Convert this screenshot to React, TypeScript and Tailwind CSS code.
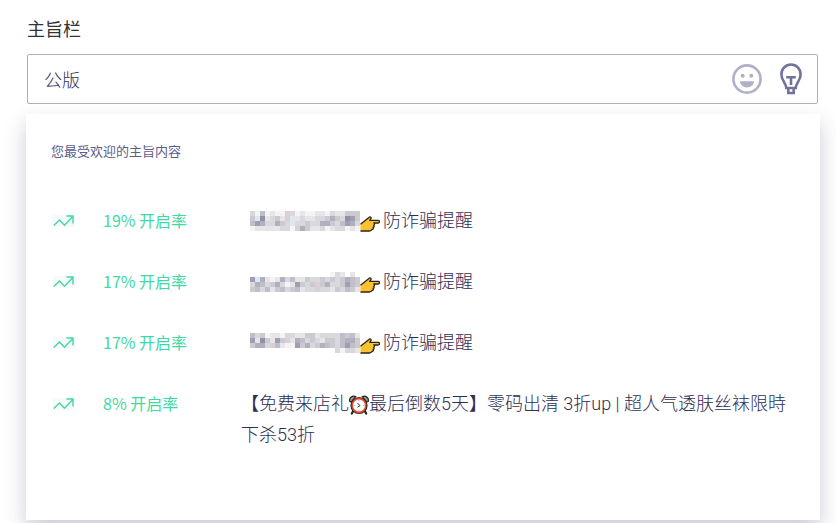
type Suggestion = {
  rate: number;
  before?: string;
  icon: "hand" | "clock";
  after: string;
  mosaic?: string[];
};

// one letter per cell, see mosaicColors
const mosaicA = [
  "caeabaajcabaabbacbbddd",
  "dihbcdbjibcbbccdfdchgd",
  "egfccfdciccdccffdcegfc",
  "abbbbbccajfdbbcabccaba",
];
const mosaicB = [
  "................acb.b.",
  "gifbabfcebbdccdcdcdfed",
  "cfecdfcabgdcdjdfccdged",
  "decebdecdebccjccbdcedb",
];
const mosaicC = [
  "ecdabbaccbbddbccccedeb",
  "gbhdbgdjbfecdcbddceffd",
  "dffcjebaagdfcdfedceged",
  ".................caccb",
];

const mosaicColors: { [key: string]: string } = {
  ".": "#ffffff",
  a: "#f4f4f5",
  b: "#e6e6e9",
  c: "#d8d8dd",
  d: "#cbcad2",
  e: "#bfbec9",
  f: "#b2b0be",
  g: "#a09fb1",
  h: "#9290a6",
  i: "#dce8f2",
  j: "#dccfd2",
};

const suggestions: Suggestion[] = [
  { rate: 19, icon: "hand", after: "防诈骗提醒", mosaic: mosaicA },
  { rate: 17, icon: "hand", after: "防诈骗提醒", mosaic: mosaicB },
  { rate: 17, icon: "hand", after: "防诈骗提醒", mosaic: mosaicC },
  {
    rate: 8,
    before: "【免费来店礼",
    icon: "clock",
    after: "最后倒数5天】零码出清 3折up | 超人气透肤丝袜限時下杀53折",
  },
];

const SmileIcon = () => (
  <svg width="30" height="30" viewBox="0 0 30 30" fill="none" aria-hidden="true">
    <circle cx="15" cy="15" r="13.6" stroke="currentColor" strokeWidth="2.6" />
    <circle cx="10.7" cy="11.8" r="2" fill="currentColor" />
    <circle cx="19.3" cy="11.8" r="2" fill="currentColor" />
    <path d="M7.800 17.200h14.400c-.6 3.800-3.500 6.200-7.200 6.200s-6.600-2.400-7.200-6.200Z" fill="currentColor" />
  </svg>
);

const BulbIcon = () => (
  <svg width="22" height="32" viewBox="0 0 22 32" fill="none" stroke="currentColor" strokeWidth="2.6" aria-hidden="true">
    <path d="M6.300 25c0-4.800-4.900-7.500-4.900-13.600a9.600 9.900 0 0 1 19.200 0c0 6.100-4.900 8.800-4.900 13.600Z" />
    <path d="M8.300 25v5h5.400v-5" />
    <path d="M6.200 14.300h9.600M11 14.300V22" />
  </svg>
);

const TrendIcon = () => (
  <svg width="22" height="12" viewBox="0 0 22 12" fill="none" stroke="#3fd9a4" strokeWidth="1.4" className="ml-px bg-[#f8f9fb]" aria-hidden="true">
    <path d="M.8 10.600 6.500 5 11.500 10.300 20 1.300M13.500 1H20v7.500" />
  </svg>
);

const HandIcon = () => (
  <svg width="20" height="16" viewBox="0 0 20 16" className="mr-[3px] inline-block align-[-5px]" role="img" aria-label="👉">
    <path
      d="M.5 15V8.200L5.200 4.400 9.500 1c1.200-.5 2.100.7 1.400 1.700L9.700 4.400h8.500c1.700 0 1.700 2.600 0 2.600h-4.400c1.100.6.9 2-.2 2.300.9.700.5 2-.5 2.200.6 1-.1 2.100-1.200 2.100-.5 1.200-1.500 1.400-2.600 1.400Z"
      fill="#fcc131"
    />
    <path
      d="M.5 8.200 5.200 4.400 9.500 1c1.200-.5 2.100.7 1.400 1.700L9.700 4.400h8.500c1.700 0 1.700 2.600 0 2.600h-4.400c1.100.6.9 2-.2 2.300.9.700.5 2-.5 2.200.6 1-.1 2.100-1.200 2.100-.5 1.200-1.500 1.400-2.600 1.400H.5"
      stroke="#2a2418"
      strokeWidth="1.3"
      strokeLinejoin="round"
      fill="none"
    />
  </svg>
);

const ClockIcon = () => (
  <svg width="20" height="20" viewBox="0 0 20 20" className="inline-block align-[-5px]" role="img" aria-label="⏰">
    <path d="m4.500 15.500-1.700 3M15.500 15.500l1.700 3" stroke="#222" strokeWidth="2.200" strokeLinecap="round" />
    <path d="M.8 6.500C-.2 3 3 .3 6.700 1.500L2.300 7Z" fill="#999" stroke="#222" strokeWidth="1.200" />
    <path d="M19.200 6.500C20.200 3 17 .3 13.300 1.500L17.700 7Z" fill="#999" stroke="#222" strokeWidth="1.200" />
    <circle cx="10" cy="10.500" r="8.600" fill="#222" />
    <circle cx="10" cy="10.500" r="6.800" fill="#fff" stroke="#e64a2e" strokeWidth="1.700" />
    <path d="m8.500 8 2.500 2.700-2.500 1.500" fill="none" stroke="#333" strokeWidth="1" />
    <path d="M10 5v1M10 15v1M4.700 10.500h1M14.300 10.500h1" stroke="#999" strokeWidth=".8" />
  </svg>
);

const Mosaic = ({ rows }: { rows: string[] }) => (
  <svg width="110" height="20" viewBox="0 0 22 4" shapeRendering="crispEdges" className="ml-[9px] inline-block align-[-4px]" aria-hidden="true">
    {rows.map((row, y) =>
      row
        .split("")
        .map((cell, x) => (
          <rect key={`${x}-${y}`} x={x} y={y} width="1" height="1" fill={mosaicColors[cell]} />
        ))
    )}
  </svg>
);

const SuggestionItem = ({ item }: { item: Suggestion }) => (
  <li className="flex items-start">
    <span className="flex h-[31px] w-[51px] shrink-0 items-center">
      <TrendIcon />
    </span>
    <span className="w-[138px] shrink-0 font-['Noto_Sans_CJK_SC',sans-serif] text-base leading-[31px] font-normal text-[#3fd9a4]">
      {item.rate}% 开启率
    </span>
    <p className="min-w-0 flex-1 text-lg leading-[31px] text-[#2e2e54]">
      {item.mosaic && <Mosaic rows={item.mosaic} />}
      {item.before}
      {item.icon === "hand" ? <HandIcon /> : <ClockIcon />}
      {item.after}
    </p>
  </li>
);

const App = () => (
  <main className="overflow-hidden bg-white pt-[17px] pr-4 pb-[3px] pl-[26px] font-['Roboto','Noto_Sans_CJK_SC',sans-serif] font-light">
    <label htmlFor="subject" className="ml-px block text-lg leading-[26px] font-normal text-[#333]">
      主旨栏
    </label>
    <div className="mt-[11px] mr-0.5 ml-px flex h-[50px] items-center rounded-xs border border-[#b0aec6] pr-[15px] pl-4">
      <input
        id="subject"
        type="text"
        defaultValue="公版"
        className="h-full min-w-0 flex-1 bg-transparent text-lg text-[#2e2e54] outline-none"
      />
      <button type="button" aria-label="表情符号" className="text-[#b1b0c9]">
        <SmileIcon />
      </button>
      <button type="button" aria-label="主旨建议" className="ml-[18px] text-[#71729a]">
        <BulbIcon />
      </button>
    </div>
    <section className="mt-[10px] bg-white px-[25px] pt-7 pb-[70px] shadow-[0_10px_20px_rgba(50,50,93,0.25)]">
      <h2 className="text-[13px] leading-5 font-normal text-[#5a5d88]">您最受欢迎的主旨内容</h2>
      <ul className="mt-[43px] ml-px flex flex-col gap-[30px]">
        {suggestions.map((item, i) => (
          <SuggestionItem key={i} item={item} />
        ))}
      </ul>
    </section>
  </main>
);

export default App;
